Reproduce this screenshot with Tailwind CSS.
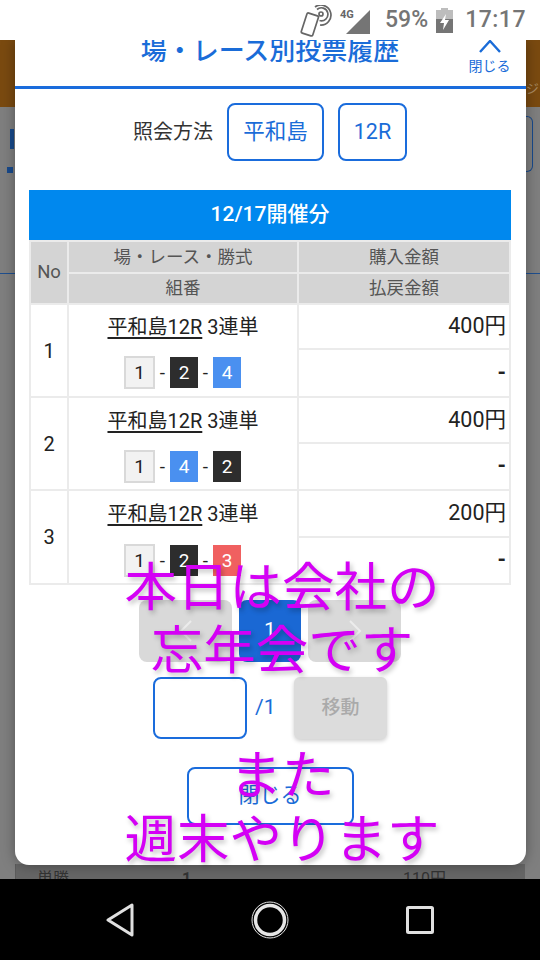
<!DOCTYPE html>
<html lang="ja">
<head>
  <meta charset="UTF-8">
  <meta name="viewport" content="width=device-width, initial-scale=1.0">
  <title>場・レース別投票履歴</title>
  <script src="https://cdn.jsdelivr.net/npm/@tailwindcss/browser@4"></script>
</head>
<body class="bg-black font-['Roboto','Noto_Sans_CJK_JP',sans-serif]">
<div class="relative w-[540px] h-[960px] overflow-hidden flex flex-col">

  <!-- status bar -->
  <div class="relative z-10 h-10 bg-white flex items-center justify-end pr-[14px] text-[#757575] shrink-0">
    <svg class="w-[32px] h-[32px] mr-[8px] mt-[2px]" viewBox="0 0 32 32" fill="none" stroke="#666" stroke-width="1.7">
      <rect x="4" y="9" width="12" height="21" rx="1.5" transform="rotate(18 10 19)" fill="#fff"/>
      <circle cx="21" cy="9" r="2"/>
      <path d="M17 4.5a6.5 6.5 0 1 1 2.5 11M15 2a10 10 0 1 1 5 18"/>
    </svg>
    <div class="relative w-[31px] h-[26px] mr-[14px]">
      <span class="absolute left-0 top-[1px] text-[11px] leading-[14px] font-bold text-[#666]">4G</span>
      <svg class="absolute left-[6px] top-[3px] w-[24px] h-[24px]" viewBox="0 0 24 24"><path d="M0 24 24 0v24z" fill="#757575"/></svg>
    </div>
    <span class="text-[23px] font-medium mr-[8px]">59%</span>
    <svg class="w-[17px] h-[25px] mr-[12px]" viewBox="0 0 17 25">
      <path d="M5 0h7v2h5v23H0V2h5z" fill="#bdbdbd"/>
      <path d="M0 11h17v14H0z" fill="#757575"/>
      <path d="M10 6 4 15h4l-1 7 6-10H9z" fill="#fff"/>
    </svg>
    <span class="text-[23px] font-medium tracking-[0.5px]">17:17</span>
  </div>

  <!-- page behind the dialog -->
  <div class="h-[67px] bg-[#7a4a10] shrink-0 flex justify-end items-end overflow-hidden">
    <span class="text-[13px] leading-[20px] text-[#a98a63] mr-[1px] mb-[8px]">ジ</span>
  </div>
  <div class="flex-1 bg-[#7f7f7f] flex flex-col">
    <div class="h-[167px] border-b border-[#1f4f8f] flex">
      <div class="w-[14px] pt-[22px]">
        <div class="w-[4px] h-[20px] ml-[10px] bg-[#184a8c]"></div>
        <div class="w-[6px] h-[6px] ml-[7px] mt-[18px] bg-[#184a8c]"></div>
      </div>
      <div class="flex-1"></div>
      <div class="w-[15px] pt-[9px]">
        <div class="w-[8px] h-[56px] border border-l-0 border-[#184a8c] rounded-r-[6px]"></div>
      </div>
    </div>
    <div class="flex-1"></div>
    <div class="h-[15px] bg-[#666] flex text-[#333] text-[16px] leading-[18px] overflow-hidden border-l border-[#5c5c5c] ml-[15px] mr-[15px]">
      <span class="w-[80px] pl-[21px] pt-[6px]">単勝</span>
      <span class="w-[76px] pl-[86px] pt-[6px] font-bold">1</span>
      <span class="ml-auto pr-[79px] pt-[6px]">110円</span>
    </div>
  </div>

  <!-- nav bar -->
  <div class="h-[81px] bg-black flex items-center justify-center shrink-0">
    <div class="w-[150px] flex justify-center">
      <svg class="w-[30px] h-[34px]" viewBox="0 0 30 34" fill="none" stroke="#e0e0e0" stroke-width="3" stroke-linejoin="round"><path d="M27 2v30L3 17z"/></svg>
    </div>
    <div class="w-[150px] flex justify-center">
      <svg class="w-[38px] h-[38px]" viewBox="0 0 38 38" fill="none" stroke="#e6e6e6"><circle cx="19" cy="19" r="18" stroke-width="1"/><circle cx="19" cy="19" r="14.5" stroke-width="3.5"/></svg>
    </div>
    <div class="w-[150px] flex justify-center">
      <svg class="w-[28px] h-[28px]" viewBox="0 0 28 28" fill="none" stroke="#e0e0e0" stroke-width="3" stroke-linejoin="round"><rect x="1.5" y="1.5" width="25" height="25" rx="1"/></svg>
    </div>
  </div>

  <!-- dialog -->
  <div class="absolute left-[14.5px] top-[40px] w-[511px] h-[825px] bg-white rounded-b-[14px] shadow-[0_0_14px_rgba(0,0,0,0.35)] flex flex-col items-center overflow-hidden">
    <div class="relative w-full h-[49px] border-b-[3px] border-[#1a6cdc] shrink-0">
      <h2 class="absolute left-0 right-0 top-[-6px] text-center text-[26px] leading-[34px] font-medium text-[#1a6cd8]">場・レース別投票履歴</h2>
      <div class="absolute left-[452px] top-[-6px] w-[46px] flex flex-col items-center text-[#1a6cd8]">
        <svg class="w-[24px] h-[20px]" viewBox="0 0 24 20" fill="none" stroke="currentColor" stroke-width="2.4"><path d="M2 18 12 7l10 11"/></svg>
        <span class="text-[14px] leading-[20px] mt-[2px]">閉じる</span>
      </div>
    </div>

    <div class="flex items-center mt-[14px] text-[#1a6cd8] text-[21.5px]">
      <span class="text-[#333] text-[20px] mr-[14px]">照会方法</span>
      <div class="w-[97px] h-[58px] border-2 border-[#1a6cdc] rounded-[8px] flex items-center justify-center">平和島</div>
      <div class="w-[69px] h-[58px] ml-[14px] border-2 border-[#1a6cdc] rounded-[8px] flex items-center justify-center">12R</div>
    </div>

    <div class="w-[482px] mt-[29px] h-[50px] bg-[#0088ee] text-white text-[21px] flex items-center justify-center font-medium shrink-0">12/17開催分</div>

    <table class="w-[482px] table-fixed border-collapse text-[#222] text-[21.5px]">
      <colgroup><col class="w-[38px]"><col class="w-[230px]"><col></colgroup>
      <thead class="bg-[#d4d4d4] text-[#555] text-[17.5px]">
        <tr class="h-[32px]">
          <th rowspan="2" class="font-normal border-2 border-[#ebebeb] text-[18.5px]">No</th>
          <th class="font-normal border-2 border-[#ebebeb]">場・レース・勝式</th>
          <th class="font-normal border-2 border-[#ebebeb]">購入金額</th>
        </tr>
        <tr class="h-[31px]">
          <th class="font-normal border-2 border-[#ebebeb]">組番</th>
          <th class="font-normal border-2 border-[#ebebeb]">払戻金額</th>
        </tr>
      </thead>
      <tbody>
        <tr class="h-[45px]">
          <td rowspan="2" class="border-2 border-[#ebebeb] text-center text-[20px]">1</td>
          <td class="border-2 border-[#ebebeb] border-b-0 text-center text-[20px]"><span class="underline decoration-[1.5px] underline-offset-[3px]">平和島12R</span> 3連単</td>
          <td class="border-2 border-[#ebebeb] text-right pr-[3px]">400円</td>
        </tr>
        <tr class="h-[48px]">
          <td class="border-2 border-[#ebebeb] border-t-0 text-center">
            <div class="flex items-center justify-center text-[19px] leading-none -ml-[1px]">
              <span class="w-[31px] h-[33px] flex items-center justify-center bg-[#f2f2f2] border-2 border-[#d9d9d9]">1</span>
              <span class="w-[15px] text-center">-</span>
              <span class="w-[28px] h-[31px] flex items-center justify-center bg-[#2d2d2d] text-white">2</span>
              <span class="w-[15px] text-center">-</span>
              <span class="w-[28px] h-[31px] flex items-center justify-center bg-[#4a90f0] text-white">4</span>
            </div>
          </td>
          <td class="border-2 border-[#ebebeb] text-right pr-[3px] font-bold">-</td>
        </tr>
        <tr class="h-[46px]">
          <td rowspan="2" class="border-2 border-[#ebebeb] text-center text-[20px]">2</td>
          <td class="border-2 border-[#ebebeb] border-b-0 text-center text-[20px]"><span class="underline decoration-[1.5px] underline-offset-[3px]">平和島12R</span> 3連単</td>
          <td class="border-2 border-[#ebebeb] text-right pr-[3px]">400円</td>
        </tr>
        <tr class="h-[47px]">
          <td class="border-2 border-[#ebebeb] border-t-0 text-center">
            <div class="flex items-center justify-center text-[19px] leading-none -ml-[1px]">
              <span class="w-[31px] h-[33px] flex items-center justify-center bg-[#f2f2f2] border-2 border-[#d9d9d9]">1</span>
              <span class="w-[15px] text-center">-</span>
              <span class="w-[28px] h-[31px] flex items-center justify-center bg-[#4a90f0] text-white">4</span>
              <span class="w-[15px] text-center">-</span>
              <span class="w-[28px] h-[31px] flex items-center justify-center bg-[#2d2d2d] text-white">2</span>
            </div>
          </td>
          <td class="border-2 border-[#ebebeb] text-right pr-[3px] font-bold">-</td>
        </tr>
        <tr class="h-[47px]">
          <td rowspan="2" class="border-2 border-[#ebebeb] text-center text-[20px]">3</td>
          <td class="border-2 border-[#ebebeb] border-b-0 text-center text-[20px]"><span class="underline decoration-[1.5px] underline-offset-[3px]">平和島12R</span> 3連単</td>
          <td class="border-2 border-[#ebebeb] text-right pr-[3px]">200円</td>
        </tr>
        <tr class="h-[47px]">
          <td class="border-2 border-[#ebebeb] border-t-0 text-center">
            <div class="flex items-center justify-center text-[19px] leading-none -ml-[1px]">
              <span class="w-[31px] h-[33px] flex items-center justify-center bg-[#f2f2f2] border-2 border-[#d9d9d9]">1</span>
              <span class="w-[15px] text-center">-</span>
              <span class="w-[28px] h-[31px] flex items-center justify-center bg-[#2d2d2d] text-white">2</span>
              <span class="w-[15px] text-center">-</span>
              <span class="w-[28px] h-[31px] flex items-center justify-center bg-[#f06060] text-white">3</span>
            </div>
          </td>
          <td class="border-2 border-[#ebebeb] text-right pr-[3px] font-bold">-</td>
        </tr>
      </tbody>
    </table>

    <!-- pager -->
    <div class="flex gap-[7px] mt-[15px] text-white text-[21px]">
      <div class="w-[93px] h-[62px] bg-[#d9d9d9] rounded-[8px] flex items-center justify-center">
        <svg class="w-[14px] h-[24px]" viewBox="0 0 14 24" fill="none" stroke="#ececec" stroke-width="2"><path d="M12 2 2 12l10 10"/></svg>
      </div>
      <div class="w-[62px] h-[62px] bg-[#1a68d4] rounded-[8px] flex items-center justify-center">1</div>
      <div class="w-[93px] h-[62px] bg-[#d9d9d9] rounded-[8px] flex items-center justify-center">
        <svg class="w-[14px] h-[24px]" viewBox="0 0 14 24" fill="none" stroke="#ececec" stroke-width="2"><path d="m2 2 10 10L2 22"/></svg>
      </div>
    </div>
    <div class="flex items-center mt-[15px] text-[21px]">
      <div class="w-[94px] h-[62px] border-2 border-[#1a6cdc] rounded-[8px]"></div>
      <span class="w-[47px] pl-[8px] text-[#1a6cd8]">/1</span>
      <div class="w-[93px] h-[62px] bg-[#dcdcdc] rounded-[6px] shadow-[0_2px_4px_rgba(0,0,0,0.2)] text-[#aaa] text-[19px] font-medium flex items-center justify-center">移動</div>
    </div>
    <div class="w-[167px] h-[58px] mt-[28px] border-2 border-[#1a6cdc] rounded-[8px] text-[#1a6cd8] text-[21px] flex items-center justify-center">閉じる</div>
  </div>

  <!-- caption drawn over the screenshot -->
  <div class="absolute left-0 top-[557px] w-[540px] text-center text-[#d400f5] text-[52.5px] leading-[62.5px] pl-[24px] [text-shadow:2px_3px_5px_rgba(0,0,0,0.25)]">
    <p>本日は会社の</p>
    <p>忘年会です</p>
    <p class="mt-[62.5px]">また</p>
    <p class="relative top-[2px]">週末やります</p>
  </div>
</div>
</body>
</html>
